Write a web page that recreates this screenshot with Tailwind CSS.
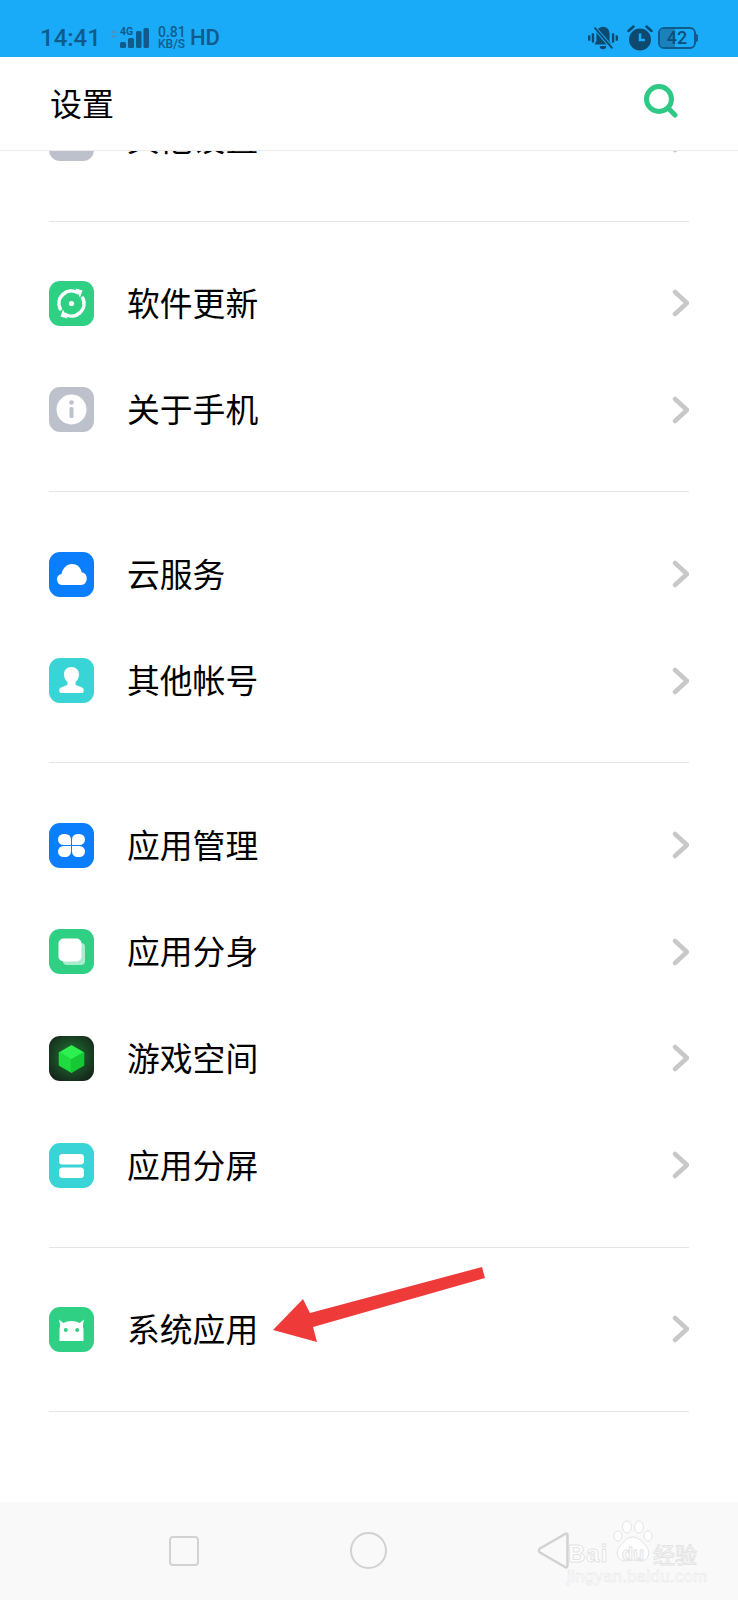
<!DOCTYPE html>
<html lang="zh-CN">
<head>
    <meta charset="UTF-8">
    <title>设置</title>
    <script src="https://cdn.jsdelivr.net/npm/@tailwindcss/browser@4"></script>
</head>
<body class="bg-white">
<div class="relative w-[738px] h-[1600px] overflow-hidden flex flex-col bg-white text-black font-['Noto_Sans_CJK_SC',sans-serif]">

    <!-- status bar -->
    <div class="h-[57px] shrink-0 bg-[#1aabf8] text-[#0f5c8c] flex items-center pl-[40px] pr-[40px] pt-[18px] font-['Roboto',sans-serif]">
        <span class="text-[24px] font-medium leading-none w-[70px]">14:41</span>
        <svg class="w-[10px] h-[20px]" viewBox="0 0 10 20" fill="#4a93c4"><path d="M1 5l3-3.5 3 3.5zM1 7l3 3.5 3-3.5z"/></svg>
        <div class="relative w-[29px] h-[20px] mt-[1px]">
            <span class="absolute left-0 -top-[1px] text-[10.5px] font-bold leading-none">4G</span>
            <svg class="w-[29px] h-[20px]" viewBox="0 0 29 20" fill="#0f5c8c">
                <rect x="0" y="14" width="6" height="6" rx="1.5"/>
                <rect x="8" y="10" width="6" height="10" rx="1.5"/>
                <rect x="16" y="3" width="5.5" height="17" rx="1.5"/>
                <rect x="23.5" y="0" width="5.5" height="20" rx="1.5"/>
            </svg>
        </div>
        <div class="ml-[9px] w-[28px] font-medium"><div class="text-[14px] leading-[11px]">0.81</div><div class="text-[12px] leading-[10px] mt-[1px]">KB/S</div></div>
        <span class="ml-[4px] text-[22px] font-medium leading-none">HD</span>
        <div class="ml-auto flex items-center">
            <svg class="w-[30px] h-[26px]" viewBox="0 0 32 26" fill="#0d4a70">
                <rect x="0" y="10" width="2.5" height="6" rx="1"/>
                <rect x="4" y="8" width="2.5" height="10" rx="1"/>
                <rect x="25.5" y="8" width="2.5" height="10" rx="1"/>
                <rect x="29.5" y="10" width="2.5" height="6" rx="1"/>
                <path d="M16 1c5 0 7 4 7 8v7l2 4H7l2-4V9c0-4 2-8 7-8z"/>
                <path d="M12.5 21.5h7a3.5 3.5 0 0 1-7 0z"/>
                <path d="M7 2l19 22" stroke="#1aabf8" stroke-width="4"/>
                <path d="M7 2l19 22" stroke="#0d4a70" stroke-width="2"/>
            </svg>
            <svg class="ml-[9px] w-[26px] h-[26px]" viewBox="0 0 26 26">
                <circle cx="13" cy="14.5" r="11" fill="#0d4a70"/>
                <path d="M13 8.5v6.5h5" fill="none" stroke="#1aabf8" stroke-width="2.5"/>
                <path d="M1.5 6L6.5 1.5M24.5 6L19.5 1.5" stroke="#0d4a70" stroke-width="2.5" stroke-linecap="round"/>
            </svg>
            <div class="relative ml-[5px] w-[38px] h-[22px] border-[2px] border-[#0f5c8c] rounded-[6px] overflow-hidden flex items-center justify-center">
                <div class="absolute inset-y-0 left-0 w-[15px] bg-[#1a81bd]"></div>
                <span class="relative text-[18px] font-medium leading-none text-[#0e4f7a]">42</span>
            </div>
            <div class="w-[2px] h-[8px] bg-[#0f5c8c] rounded-r-sm"></div>
        </div>
    </div>

    <!-- header -->
    <div class="h-[94px] shrink-0 bg-white border-b border-[#ececec] flex items-center justify-between pl-[50px] pr-[60px]">
        <h1 class="text-[32px] leading-none font-normal -mt-[3px]">设置</h1>
        <svg class="w-[34px] h-[34px] -mt-[6px]" viewBox="0 0 34 34" fill="none" stroke="#2fc985" stroke-width="5" stroke-linecap="round">
            <circle cx="15" cy="15" r="12.5"/>
            <path d="M25 25l6 6"/>
        </svg>
    </div>

    <!-- list -->
    <div class="flex-1 px-[49px]">
        <div class="border-b border-[#e5e5e5] pb-[28.5px]">
            <div class="h-[41px] overflow-hidden flex items-end">
                <div class="shrink-0 w-full h-[107px] flex items-center gap-[33px]">
                    <div class="w-[45px] h-[45px] rounded-[11px] bg-[#bcc1cc]"></div>
                    <span class="text-[32.8px] leading-none -mt-[2px]">其他设置</span>
                    <svg class="ml-auto w-[18px] h-[28px]" viewBox="0 0 18 28" fill="none" stroke="#c8c8c8" stroke-width="4.5" stroke-linecap="round" stroke-linejoin="round"><path d="M4 3l12 11-12 11"/></svg>
                </div>
            </div>
        </div>

        <div class="border-b border-[#e5e5e5] py-[28.3px]">
            <div class="h-[106.7px] flex items-center gap-[33px]">
                <svg class="w-[45px] h-[45px]" viewBox="0 0 45 45">
                    <rect width="45" height="45" rx="11" fill="#2fd083"/>
                    <path d="M28.5 11.5A12.5 12.5 0 0 0 11.2 27.8" fill="none" stroke="#fff" stroke-width="3.6" stroke-linecap="round"/>
                    <path d="M16.5 33.5A12.5 12.5 0 0 0 33.8 17.2" fill="none" stroke="#fff" stroke-width="3.6" stroke-linecap="round"/>
                    <path d="M26.5 7.5L33.5 9.5 31 16.500z" fill="#fff"/>
                    <path d="M18.5 37.5L11.5 35.5 14 28.500z" fill="#fff"/>
                    <circle cx="22.5" cy="22.5" r="2.6" fill="#fff"/>
                </svg>
                <span class="text-[32.8px] leading-none -mt-[2px]">软件更新</span>
                <svg class="ml-auto w-[18px] h-[28px]" viewBox="0 0 18 28" fill="none" stroke="#c8c8c8" stroke-width="4.5" stroke-linecap="round" stroke-linejoin="round"><path d="M4 3l12 11-12 11"/></svg>
            </div>
            <div class="h-[106.7px] flex items-center gap-[33px]">
                <svg class="w-[45px] h-[45px]" viewBox="0 0 45 45">
                    <rect width="45" height="45" rx="11" fill="#bcc1cc"/>
                    <circle cx="22.5" cy="22.5" r="15" fill="#fff"/>
                    <circle cx="22.5" cy="15.5" r="2.3" fill="#bcc1cc"/>
                    <rect x="20.5" y="20" width="4" height="11" rx="1.5" fill="#bcc1cc"/>
                </svg>
                <span class="text-[32.8px] leading-none -mt-[2px]">关于手机</span>
                <svg class="ml-auto w-[18px] h-[28px]" viewBox="0 0 18 28" fill="none" stroke="#c8c8c8" stroke-width="4.5" stroke-linecap="round" stroke-linejoin="round"><path d="M4 3l12 11-12 11"/></svg>
            </div>
        </div>

        <div class="border-b border-[#e5e5e5] py-[28.3px]">
            <div class="h-[106.7px] flex items-center gap-[33px]">
                <svg class="w-[45px] h-[45px]" viewBox="0 0 45 45">
                    <rect width="45" height="45" rx="11" fill="#0a7efc"/>
                    <path d="M13.5 33a5.5 5.5 0 0 1-1-10.9C13.5 16.5 17.5 12 23 12c5 0 8.8 3.5 9.7 8.2A6.5 6.5 0 0 1 32 33z" fill="#fff"/>
                </svg>
                <span class="text-[32.8px] leading-none -mt-[2px]">云服务</span>
                <svg class="ml-auto w-[18px] h-[28px]" viewBox="0 0 18 28" fill="none" stroke="#c8c8c8" stroke-width="4.5" stroke-linecap="round" stroke-linejoin="round"><path d="M4 3l12 11-12 11"/></svg>
            </div>
            <div class="h-[106.7px] flex items-center gap-[33px]">
                <svg class="w-[45px] h-[45px]" viewBox="0 0 45 45">
                    <rect width="45" height="45" rx="11" fill="#39d5d6"/>
                    <path d="M22.5 9c4.8 0 7.5 3.4 7.5 7.5 0 3.3-1.6 6.1-3.5 7.6v1.6c0 1 .6 1.5 1.5 1.9l5 2c1.2.5 1.7 1.4 1.7 2.6v.8c0 1.1-.7 2-2 2H12.3c-1.3 0-2-.9-2-2v-.8c0-1.2.5-2.1 1.7-2.6l5-2c.9-.4 1.5-.9 1.5-1.9v-1.6c-1.9-1.5-3.5-4.3-3.5-7.6C15 12.4 17.7 9 22.5 9z" fill="#fff"/>
                </svg>
                <span class="text-[32.8px] leading-none -mt-[2px]">其他帐号</span>
                <svg class="ml-auto w-[18px] h-[28px]" viewBox="0 0 18 28" fill="none" stroke="#c8c8c8" stroke-width="4.5" stroke-linecap="round" stroke-linejoin="round"><path d="M4 3l12 11-12 11"/></svg>
            </div>
        </div>

        <div class="border-b border-[#e5e5e5] py-[28.3px]">
            <div class="h-[106.7px] flex items-center gap-[33px]">
                <svg class="w-[45px] h-[45px]" viewBox="0 0 45 45">
                    <rect width="45" height="45" rx="11" fill="#0a7efc"/>
                    <path d="M22 22h-7.5a5.5 5.5 0 0 1 0-11h2a5.5 5.5 0 0 1 5.5 5.5zM23 22h7.5a5.5 5.5 0 0 0 0-11h-2a5.5 5.5 0 0 0-5.5 5.5zM22 23h-7.5a5.5 5.5 0 0 0 0 11h2a5.5 5.5 0 0 0 5.5-5.5zM23 23h7.5a5.5 5.5 0 0 1 0 11h-2a5.5 5.5 0 0 1-5.5-5.5z" fill="#fff"/>
                </svg>
                <span class="text-[32.8px] leading-none -mt-[2px]">应用管理</span>
                <svg class="ml-auto w-[18px] h-[28px]" viewBox="0 0 18 28" fill="none" stroke="#c8c8c8" stroke-width="4.5" stroke-linecap="round" stroke-linejoin="round"><path d="M4 3l12 11-12 11"/></svg>
            </div>
            <div class="h-[106.7px] flex items-center gap-[33px]">
                <svg class="w-[45px] h-[45px]" viewBox="0 0 45 45">
                    <rect width="45" height="45" rx="11" fill="#2fd083"/>
                    <rect x="14" y="14" width="22" height="22" rx="4" fill="#fff" opacity="0.6"/>
                    <rect x="9.5" y="9.5" width="23" height="23" rx="5" fill="#fff"/>
                </svg>
                <span class="text-[32.8px] leading-none -mt-[2px]">应用分身</span>
                <svg class="ml-auto w-[18px] h-[28px]" viewBox="0 0 18 28" fill="none" stroke="#c8c8c8" stroke-width="4.5" stroke-linecap="round" stroke-linejoin="round"><path d="M4 3l12 11-12 11"/></svg>
            </div>
            <div class="h-[106.7px] flex items-center gap-[33px]">
                <svg class="w-[45px] h-[45px]" viewBox="0 0 45 45">
                    <defs>
                        <radialGradient id="gameBg" cx="0.5" cy="0.45" r="0.6">
                            <stop offset="0" stop-color="#1f7a35"/>
                            <stop offset="1" stop-color="#16291b"/>
                        </radialGradient>
                    </defs>
                    <rect width="45" height="45" rx="11" fill="url(#gameBg)"/>
                    <path d="M22.5 10l12 7-12 7-12-7z" fill="#2cf04f" stroke="#2cf04f" stroke-width="1.5" stroke-linejoin="round"/>
                    <path d="M10.5 17l12 7v12l-12-7z" fill="#1fdb3f" stroke="#1fdb3f" stroke-width="1.5" stroke-linejoin="round"/>
                    <path d="M34.5 17l-12 7v12l12-7z" fill="#16c934" stroke="#16c934" stroke-width="1.5" stroke-linejoin="round"/>
                </svg>
                <span class="text-[32.8px] leading-none -mt-[2px]">游戏空间</span>
                <svg class="ml-auto w-[18px] h-[28px]" viewBox="0 0 18 28" fill="none" stroke="#c8c8c8" stroke-width="4.5" stroke-linecap="round" stroke-linejoin="round"><path d="M4 3l12 11-12 11"/></svg>
            </div>
            <div class="h-[106.7px] flex items-center gap-[33px]">
                <svg class="w-[45px] h-[45px]" viewBox="0 0 45 45">
                    <rect width="45" height="45" rx="11" fill="#39d5d6"/>
                    <rect x="10" y="11" width="25" height="10.5" rx="3.5" fill="#fff"/>
                    <rect x="10" y="24.5" width="25" height="10.5" rx="3.5" fill="#fff"/>
                </svg>
                <span class="text-[32.8px] leading-none -mt-[2px]">应用分屏</span>
                <svg class="ml-auto w-[18px] h-[28px]" viewBox="0 0 18 28" fill="none" stroke="#c8c8c8" stroke-width="4.5" stroke-linecap="round" stroke-linejoin="round"><path d="M4 3l12 11-12 11"/></svg>
            </div>
        </div>

        <div class="border-b border-[#e5e5e5] py-[28.3px]">
            <div class="h-[106.7px] flex items-center gap-[33px]">
                <svg class="w-[45px] h-[45px]" viewBox="0 0 45 45">
                    <rect width="45" height="45" rx="11" fill="#2fd083"/>
                    <path d="M10 12.5l4.5 3.5c2-1.3 4.8-2 8-2s6 .7 8 2l4.5-3.5-1.2 6.5c.5 1.3.7 2.7.7 4V34H10.5V23c0-1.3.2-2.7.7-4z" fill="#fff"/>
                    <circle cx="16.8" cy="23" r="2" fill="#2fd083"/>
                    <circle cx="28.2" cy="23" r="2" fill="#2fd083"/>
                </svg>
                <span class="text-[32.8px] leading-none -mt-[2px]">系统应用</span>
                <svg class="ml-auto w-[18px] h-[28px]" viewBox="0 0 18 28" fill="none" stroke="#c8c8c8" stroke-width="4.5" stroke-linecap="round" stroke-linejoin="round"><path d="M4 3l12 11-12 11"/></svg>
            </div>
        </div>
    </div>

    <!-- nav bar -->
    <div class="h-[98px] shrink-0 bg-[#f9f9f9] flex items-start pt-[30px]">
        <div class="ml-[169px] mt-[4px] w-[30px] h-[30px] border-[2px] border-[#d2d2d2] rounded-[4px]"></div>
        <div class="ml-[151px] w-[37px] h-[37px] border-[2px] border-[#d2d2d2] rounded-full"></div>
        <svg class="ml-[150px] w-[32px] h-[37px]" viewBox="0 0 32 37" fill="none" stroke="#d2d2d2" stroke-width="2.5" stroke-linejoin="round"><path d="M28 2c1.5-1 2.5 0 2.5 1.5v30c0 1.5-1 2.5-2.5 1.5L3 20.5c-1.5-1-1.5-3 0-4z"/></svg>
    </div>

    <!-- red annotation arrow -->
    <svg class="absolute left-0 top-[1250px] w-[500px] h-[110px]" viewBox="0 0 500 110" fill="#ef3a3a">
        <path d="M482 17L485 28 313 77 317 92 273 80 303 49 310 63z"/>
    </svg>

    <!-- baidu watermark -->
    <div class="absolute left-[566px] top-[1520px] w-[136px] h-[66px] text-white font-['Liberation_Sans',sans-serif] [-webkit-text-stroke:1px_#e4e4e4]">
        <span class="absolute left-[2px] top-[22px] text-[24px] font-bold leading-none tracking-[1px]">Bai</span>
        <svg class="absolute left-[46px] top-[0px] w-[42px] h-[44px]" viewBox="0 0 42 44" fill="#fff" stroke="#e4e4e4" stroke-width="1">
            <ellipse cx="15" cy="7" rx="4.5" ry="6"/>
            <ellipse cx="27" cy="7" rx="4.5" ry="6"/>
            <ellipse cx="6" cy="16" rx="4" ry="5"/>
            <ellipse cx="36" cy="16" rx="4" ry="5"/>
            <path d="M21 17c6 0 9 5 13 9 5 5 3 15-5 15-3 0-5-1-8-1s-5 1-8 1c-8 0-10-10-5-15 4-4 7-9 13-9z"/>
        </svg>
        <span class="absolute left-[56px] top-[25px] text-[18px] font-bold leading-none">du</span>
        <span class="absolute left-[87px] top-[22px] text-[22px] leading-none font-['Noto_Sans_CJK_SC',sans-serif]">经验</span>
        <span class="absolute left-[1px] top-[48px] text-[17px] leading-none tracking-[0.2px] [-webkit-text-stroke:0.5px_#e6e6e6]">jingyan.baidu.com</span>
    </div>
</div>
</body>
</html>
